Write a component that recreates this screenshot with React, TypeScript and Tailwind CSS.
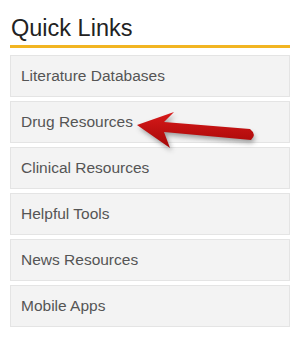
import React from 'react';

const links = [
  'Literature Databases',
  'Drug Resources',
  'Clinical Resources',
  'Helpful Tools',
  'News Resources',
  'Mobile Apps',
];

// Red pointer arrow drawn over the "Drug Resources" row
const Arrow = () => (
  <svg
    className="absolute left-0 top-0 pointer-events-none"
    width={300}
    height={340}
    viewBox="0 0 300 340"
  >
    <defs>
      <filter id="shadow" x="-20%" y="-50%" width="140%" height="200%">
        <feGaussianBlur stdDeviation="2.5" />
      </filter>
      <linearGradient id="red" x1="0" y1="0" x2="0" y2="1">
        <stop offset="0" stopColor="#d81a1a" />
        <stop offset="1" stopColor="#a50808" />
      </linearGradient>
    </defs>
    <path
      d="M139 128 L175 116 L166 125 L251 133 Q258 138 252 143 L166 135 L172 151 Z"
      fill="#555"
      opacity="0.55"
      filter="url(#shadow)"
    />
    <path
      d="M137 125 L174 112 L164 122 L250 129 Q257 134.5 251 140 L164 132 L170 148 Z"
      fill="url(#red)"
    />
  </svg>
);

export default function App() {
  return (
    <div className="relative w-[300px] h-[340px] bg-white px-[10px] pt-[14px]" style={{ fontFamily: '"Liberation Sans", Arial, sans-serif' }}>
      <h2 className="text-[23.5px] leading-[28px] text-[#222] pl-[1px] pb-[3px] border-b-[3px] border-[#f2b522]">
        Quick Links
      </h2>
      <ul className="mt-[7px] flex flex-col gap-[4px]">
        {links.map((label) => (
          <li
            key={label}
            className="h-[42px] flex items-center px-[10px] bg-[#f3f3f3] border border-[#e4e4e4] text-[15.5px] text-[#555]"
          >
            {label}
          </li>
        ))}
      </ul>
      <Arrow />
    </div>
  );
}
